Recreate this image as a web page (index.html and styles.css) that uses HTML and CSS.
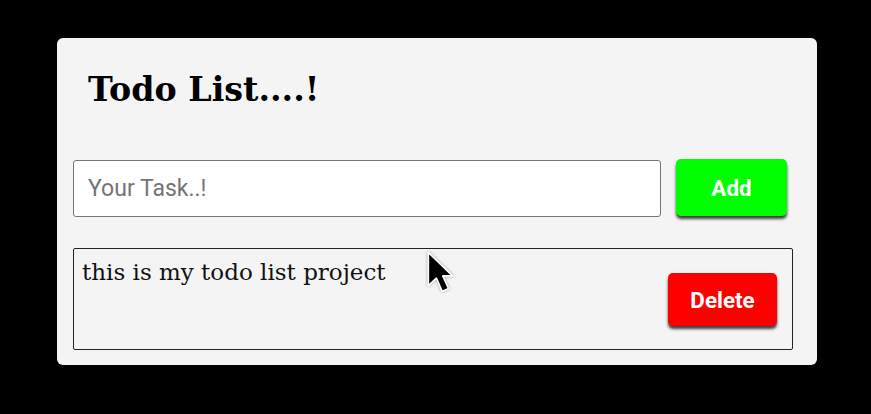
FILE: index.html
```html
<!DOCTYPE html>
<html>
<head>
<meta charset="utf-8">
<link rel="stylesheet" href="styles.css">
</head>
<body>
<div class="card">
  <h1 class="title">Todo List....!</h1>
  <div class="form-row">
    <input class="task-input" type="text" placeholder="Your Task..!">
    <button class="btn btn-add">Add</button>
  </div>
  <div class="item">
    <span class="item-text">this is my todo list project</span>
    <button class="btn btn-delete">Delete</button>
  </div>
</div>
<svg class="cursor" width="30" height="46" viewBox="0 0 26 40">
  <path d="M2 2 L2 31 L9 24.5 L14 36 L19.5 33.5 L14.5 22.5 L23 22.5 Z" fill="#000" stroke="#fff" stroke-width="1.4" stroke-linejoin="round"/>
</svg>
</body>
</html>
```
FILE: styles.css
```css
html, body {
  margin: 0;
  padding: 0;
  background: #000;
  width: 871px;
  height: 414px;
  overflow: hidden;
}
body {
  position: relative;
  padding-top: 38px;
  padding-left: 57px;
  box-sizing: border-box;
}
.card {
  width: 760px;
  height: 327px;
  background: #f4f4f4;
  border-radius: 6px;
  box-sizing: border-box;
  padding: 0 16px;
  display: flex;
  flex-direction: column;
}
.title {
  margin: 0;
  padding: 32px 0 0 15px;
  height: 90px;
  box-sizing: border-box;
  font-family: "DejaVu Serif", serif;
  font-weight: bold;
  font-size: 33.3px;
  color: #000;
}
.form-row {
  display: flex;
  align-items: flex-start;
  gap: 15px;
  margin-top: 32px;
}
.task-input {
  width: 588px;
  height: 57px;
  box-sizing: border-box;
  border: 1.5px solid #767676;
  border-radius: 3px;
  background: #fff;
  padding: 0 14px;
  font-family: Roboto, sans-serif;
  font-size: 23px;
  outline: none;
}
.task-input::placeholder {
  color: #757575;
}
.btn {
  border: none;
  border-radius: 5px;
  color: #fff;
  font-family: Roboto, sans-serif;
  font-weight: bold;
  font-size: 22.4px;
  box-shadow: 0 3px 3px rgba(0,0,0,0.75);
  cursor: pointer;
}
.btn-add {
  width: 111px;
  height: 57px;
  background: #00ff00;
  margin-top: -1px;
}
.item {
  margin-top: 31px;
  width: 720px;
  height: 102px;
  box-sizing: border-box;
  border: 1.5px solid #222;
  border-radius: 2px;
  display: flex;
  justify-content: space-between;
  align-items: flex-start;
  padding: 10px 15px 0 8px;
}
.item-text {
  font-family: "DejaVu Serif", serif;
  font-size: 23px;
  color: #111;
}
.btn-delete {
  width: 109px;
  height: 53px;
  background: #ff0000;
  margin-top: 14px;
}
.cursor {
  position: absolute;
  left: 426px;
  top: 250px;
  filter: drop-shadow(0 0 1.5px rgba(0,0,0,0.35));
}
```
